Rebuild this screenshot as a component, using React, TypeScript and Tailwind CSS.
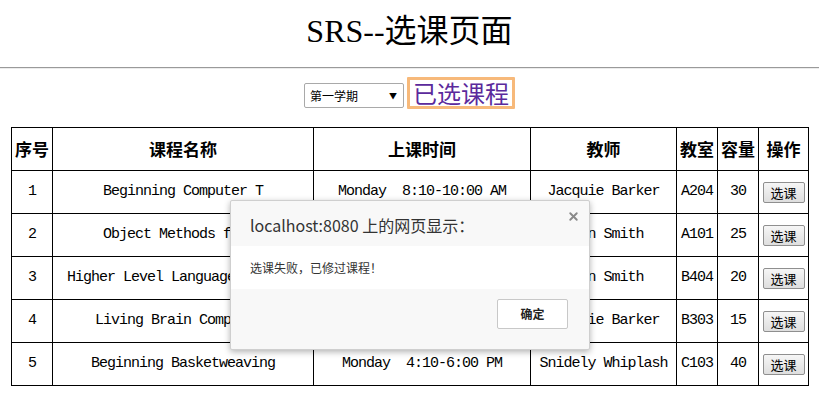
import { X } from 'lucide-react'

interface Course {
  no: number
  name: string
  time: string
  teacher: string
  room: string
  cap: number
}

const courses: Course[] = [
  { no: 1, name: 'Beginning Computer T', time: 'Monday  8:10-10:00 AM', teacher: 'Jacquie Barker', room: 'A204', cap: 30 },
  { no: 2, name: 'Object Methods for S', time: 'Tuesday  8:10-10:00 AM', teacher: 'John Smith', room: 'A101', cap: 25 },
  { no: 3, name: 'Higher Level Languages (Java)', time: 'Wednesday  8:10-10:00 AM', teacher: 'John Smith', room: 'B404', cap: 20 },
  { no: 4, name: 'Living Brain Computers', time: 'Thursday  8:10-10:00 AM', teacher: 'Jacquie Barker', room: 'B303', cap: 15 },
  { no: 5, name: 'Beginning Basketweaving', time: 'Monday  4:10-6:00 PM', teacher: 'Snidely Whiplash', room: 'C103', cap: 40 },
]

const headers = ['序号', '课程名称', '上课时间', '教师', '教室', '容量', '操作']
const widths = ['w-[41px]', 'w-[261px]', 'w-[217px]', 'w-[146px]', 'w-[41px]', 'w-[41px]', 'w-[50px]']

const mono = "font-['Liberation_Mono','Noto_Sans_CJK_SC',monospace] text-[15px] tracking-[-1px]"
const cjk = "font-['Noto_Sans_CJK_SC',sans-serif]"

export default function App() {
  return (
    <div className="relative w-[819px] h-[401px] bg-white overflow-hidden text-black">
      <div className="h-[67px] flex items-center justify-center pb-[6px]">
        <h1 className="text-[32px] leading-none font-normal font-['Liberation_Serif','Noto_Sans_CJK_SC',serif]">
          SRS--选课页面
        </h1>
      </div>
      <div className="border-t border-t-[#9a9a9a] border-b border-b-[#ececec]" />

      <div className="flex items-center justify-center gap-[3px] mt-[8px] h-[32px]">
        <div className={`w-[100px] h-[25px] mt-[5px] border border-[#a9a9a9] rounded-[2px] flex items-center justify-between pl-[5px] pr-[6px] text-[12px] ${cjk}`}>
          <span>第一学期</span>
          <span className="text-[8px]">▼</span>
        </div>
        <a className={`px-[3px] border-[3px] border-[#f7b97a] rounded-[1px] text-[24px] leading-[26px] text-[#5b2a9c] ${cjk}`}>
          已选课程
        </a>
      </div>

      <div className="px-[11px] mt-[18px]">
        <table className="w-[797px] table-fixed border-collapse border border-black">
          <thead>
            <tr className="h-[43px]">
              {headers.map((h, i) => (
                <th key={h} className={`${widths[i]} border border-black p-0 text-[17px] font-bold ${cjk}`}>
                  {h}
                </th>
              ))}
            </tr>
          </thead>
          <tbody>
            {courses.map((c) => (
              <tr key={c.no} className="h-[43px]">
                <td className={`border border-black text-center p-0 ${mono}`}>{c.no}</td>
                <td className={`border border-black text-center p-0 whitespace-pre ${mono}`}>{c.name}</td>
                <td className={`border border-black text-center p-0 whitespace-pre ${mono}`}>{c.time}</td>
                <td className={`border border-black text-center p-0 whitespace-pre ${mono}`}>{c.teacher}</td>
                <td className={`border border-black text-center p-0 ${mono}`}>{c.room}</td>
                <td className={`border border-black text-center p-0 ${mono}`}>{c.cap}</td>
                <td className="border border-black text-center p-0">
                  <button className={`w-[42px] h-[21px] border border-[#8f8f8f] rounded-[2px] bg-gradient-to-b from-[#f6f6f6] to-[#dedede] text-[13px] leading-none ${cjk}`}>
                    选课
                  </button>
                </td>
              </tr>
            ))}
          </tbody>
        </table>
      </div>

      <div className={`absolute left-[230px] top-[200px] w-[360px] h-[150px] rounded-[2px] border border-[#cfcfcf] shadow-[0_2px_6px_rgba(0,0,0,0.3)] bg-[#f8f8f8] flex flex-col ${cjk}`}>
        <div className="relative h-[45px] flex items-center pl-[19px] pt-[2px] text-[16px] text-[#333]">
          <span>localhost:8080 上的网页显示：</span>
          <X className="absolute right-[9px] top-[9px] w-[13px] h-[13px] text-[#8a8a8a]" strokeWidth={3.5} />
        </div>
        <div className="h-[43px] bg-white pl-[19px] pt-[13px] text-[12px] text-[#333]">
          选课失败，已修过课程！
        </div>
        <div className="flex-1 flex justify-end pr-[21px] pt-[10px]">
          <button className="w-[71px] h-[30px] border border-[#c8c8c8] rounded-[2px] bg-white text-[12px] font-bold text-[#222]">
            确定
          </button>
        </div>
      </div>
    </div>
  )
}
